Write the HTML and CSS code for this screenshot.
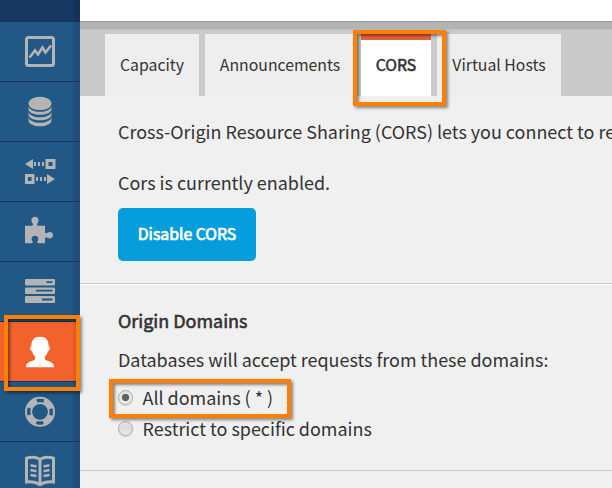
FILE: index.html
```html
<!DOCTYPE html>
<html lang="en">
<head>
<meta charset="utf-8">
<title>CORS</title>
<link rel="stylesheet" href="styles.css">
</head>
<body>
<div class="app">
  <nav class="sidebar">
    <a class="item"><svg viewBox="0 0 30 30"><rect x="1.500" y="1.500" width="27" height="28" rx="2" fill="none" stroke="currentColor" stroke-width="3"/><path d="M4.500 21.500L10 14.500L13 18.500L17.500 11.500L20.500 16.500L26 9.500" fill="none" stroke="currentColor" stroke-width="2.600"/></svg></a>
    <a class="item"><svg viewBox="0 -.7 30 30"><ellipse cx="15" cy="6.700" rx="11.500" ry="6.700"/><path d="M3.500 9.500c1 7.300 22 7.300 23 0v3.300c-1 7-22 7-23 0zM3.500 15c1 7.300 22 7.300 23 0v3.300c-1 7-22 7-23 0zM3.500 20.500c1 7.300 22 7.300 23 0v3.500c-1 7.300-22 7.300-23 0z"/></svg></a>
    <a class="item"><svg viewBox="0 0 30 30"><path d="M0 8L8 3v10zM9 6h2v4H9zM13 6h2v4h-2zM17 6h2v4h-2zM30 23L22 18v10zM11 21h2v4h-2zM15 21h2v4h-2zM19 21h2v4h-2z"/><path d="M22 4.500h7v7H22zM1.500 19.500H8v7H1.500z" fill="none" stroke="currentColor" stroke-width="3"/></svg></a>
    <a class="item"><svg viewBox="0 .7 30 30"><path d="M0 10.500h6c2.200 0 2.500-1.200 1.500-2.500C5.500 5.500 6.300 1.500 10 1.500s4.500 4 2.500 6.500c-1 1.300-.7 2.500 1.500 2.500h6v5.500c0 2.200 1.200 2.500 2.500 1.500 2-1.500 5.500-.8 5.500 2.500s-3.500 4-5.500 2.500c-1.300-1-2.500-.7-2.500 1.500v4h-6.500c-1.800 0-1.500-1.200-.8-2.300 1.500-2.400.3-5.200-2.700-5.200s-4.200 2.800-2.700 5.200c.7 1.100 1 2.300-.8 2.300H0z"/></svg></a>
    <a class="item"><svg viewBox="0 0 30 30"><path fill-rule="evenodd" d="M1 3h28q1 0 1 1v4.500q0 1-1 1H1q-1 0-1-1V4q0-1 1-1zM21.500 5.300v1.800h6V5.300zM1 11.500h28q1 0 1 1V17q0 1-1 1H1q-1 0-1-1v-4.500q0-1 1-1zM11 13.800v1.800h16.500v-1.800zM1 20h28q1 0 1 1v5q0 1-1 1H1q-1 0-1-1v-5q0-1 1-1zM17 22.600v1.800h10.500v-1.800z"/></svg></a>
    <a class="item item-active"><svg viewBox="0 -.7 30 30"><path d="M15 0c5.600 0 9 3.300 8.600 9.500 1.800 0 1.700 4.500-.7 5-.6 2.500-1.700 4-3.200 5.500 0 2 .3 3.200 2 3.800 5 1.600 7.300 2.700 7.300 6.700H1c0-4 2.300-5.100 7.300-6.700 1.700-.6 2-1.800 2-3.800-1.500-1.500-2.600-3-3.200-5.500-2.400-.5-2.500-5-.7-5C6 3.300 9.400 0 15 0z"/></svg></a>
    <a class="item"><svg viewBox="0 -.8 30 30"><g fill="none" stroke="currentColor"><circle cx="15" cy="15" r="14" stroke-width="2"/><circle cx="15" cy="15" r="8.800" stroke-width="1.800"/><circle cx="15" cy="15" r="11.200" stroke-width="6" stroke-dasharray="10.600 6.993" stroke-dashoffset="-3.497"/></g></svg></a>
    <a class="item"><svg viewBox="0 -.7 30 30"><path d="M15 2.700C11.500.6 6 .2 1.500 1.600v23.600c5-.6 9.500.1 13.500 2.800 4-2.700 8.500-3.400 13.500-2.800V1.600C24 .2 18.500.6 15 2.700zV28" fill="none" stroke="currentColor" stroke-width="3"/><path d="M5.500 8.500l6 1.200M5.500 13.300l6 1.200M5.500 18.200l6 1.200M24.500 8.500l-6 1.200M24.500 13.300l-6 1.200M24.500 18.200l-6 1.200" stroke="currentColor" stroke-width="2.600"/></svg></a>
  </nav>
  <main class="main">
    <header class="topbar"></header>
    <div class="tabs">
      <a class="tab tab-capacity">Capacity</a>
      <a class="tab tab-announcements">Announcements</a>
      <a class="tab tab-active">CORS</a>
      <a class="tab tab-hosts">Virtual Hosts</a>
    </div>
    <section class="panel intro">
      <p class="text lead">Cross-Origin Resource Sharing (CORS) lets you connect to re</p>
      <p class="text status">Cors is currently enabled.</p>
      <button class="button">Disable CORS</button>
    </section>
    <section class="panel domains">
      <h2 class="heading">Origin Domains</h2>
      <p class="text accept">Databases will accept requests from these domains:</p>
      <div class="option"><i class="radio radio-on"></i><span class="text">All domains ( * )</span></div>
      <div class="option"><i class="radio"></i><span class="text">Restrict to specific domains</span></div>
    </section>
  </main>
  <div class="mark mark-tab"></div>
  <div class="mark mark-nav"></div>
  <div class="mark mark-option"></div>
</div>
</body>
</html>
```
FILE: styles.css
```css
* { box-sizing: border-box; }
body { margin: 0; font-family: "Noto Sans CJK SC", "Open Sans", sans-serif; color: #333; }
.app { position: relative; display: flex; width: 612px; height: 488px; overflow: hidden; background: #f0f0f0; }
.sidebar {
  flex: none; width: 80px; padding-top: 22px;
  background: linear-gradient(90deg, transparent 73px, rgba(10, 25, 50, .2) 73px), #173860;
}
.item {
  display: flex; justify-content: center; align-items: center; height: 60px; padding-bottom: 1px;
  border-bottom: 1px solid #17355c; color: #b4b4b4;
  background: linear-gradient(90deg, transparent 73px, rgba(23, 56, 96, .28) 73px), #215886;
}
.item svg { display: block; width: 30px; height: 30px; fill: currentColor; overflow: visible; }
.item-active { color: #fff; background: linear-gradient(90deg, transparent 73px, rgba(120, 50, 30, .14) 73px), #f3622d; }
.main { flex: 1; min-width: 0; overflow: hidden; }
.topbar { height: 22px; background: #fff; border-bottom: 1px solid #999; }
.tabs {
  display: flex; gap: 6px; height: 74px; padding: 12px 0 0 25px;
  background: linear-gradient(#b4b4b4 7px, #bebebe 7px, #bebebe 8px, #cacaca 8px);
}
.tab {
  display: flex; justify-content: center; height: 62px; background: #eee;
  font-size: 15.800px; line-height: 62px; white-space: nowrap;
}
.tab-capacity { width: 94px; }
.tab-announcements { width: 150px; }
.tab-active { width: 70px; background: linear-gradient(#e8603a 6px, #fff 6px); -webkit-text-stroke: .6px #333; }
.tab-hosts { width: 124px; }
.panel { padding-left: 38px; }
.text { margin: 0; font-size: 17.960px; line-height: 26px; white-space: nowrap; }
.intro { height: 188px; padding-top: 22px; border-bottom: 1px solid #ccc; }
.status { margin-top: 25px; }
.button {
  display: block; width: 138px; height: 53px; margin-top: 13px; padding: 0 0 2px; border: 0; border-radius: 5px;
  background: #069ddd; color: #fff; font: 15.800px/51px "Noto Sans CJK SC", sans-serif; -webkit-text-stroke: .7px #fff;
}
.domains { height: 187px; padding-top: 22px; border-top: 1px solid #fff; border-bottom: 1px solid #ccc; }
.heading { margin: 0; font-size: 17.960px; line-height: 26px; font-weight: 400; -webkit-text-stroke: .6px #333; }
.accept { margin-top: 13px; margin-bottom: 10px; }
.option { display: flex; align-items: flex-start; height: 31px; gap: 9.500px; }
.option .text { margin-top: 2px; }
.radio {
  width: 15px; height: 15px; margin-top: 8px; border: 1px solid #aaa; border-radius: 50%;
  background: linear-gradient(#e2e2e2, #ddd 45%, #ececec); box-shadow: 0 1px 1px rgba(0, 0, 0, .12);
}
.radio-on { background: radial-gradient(circle, #606060 3.300px, transparent 4px), linear-gradient(#ddd, #eee); }
.mark {
  position: absolute; border: 4px solid #ff8000;
  box-shadow: 2px 2px 3px rgba(0, 0, 0, .45), inset 2px 2px 3px rgba(0, 0, 0, .45);
}
.mark-tab { left: 353px; top: 30px; width: 93px; height: 76px; }
.mark-nav { left: 4px; top: 315px; width: 76px; height: 76px; }
.mark-option { left: 109px; top: 379px; width: 182px; height: 39px; }
```
